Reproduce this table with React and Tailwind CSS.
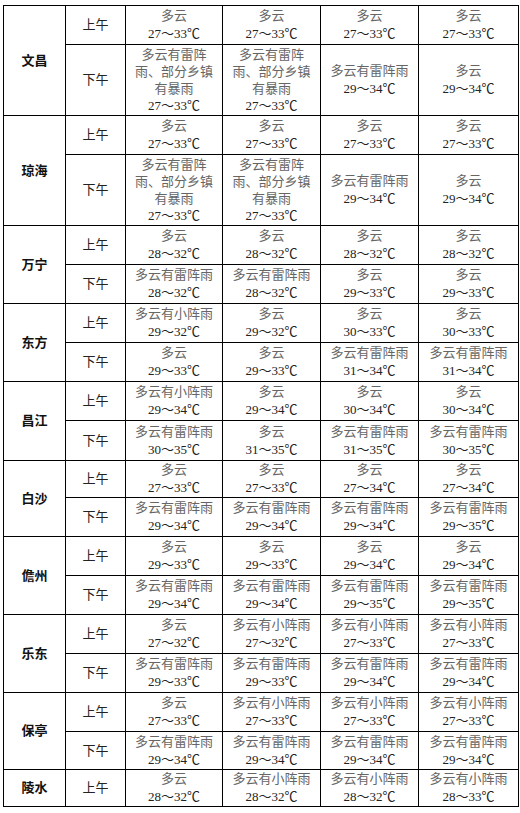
import React from "react";

const L = "多云有雷阵雨、部分乡镇有暴雨";
const a = (w, t) => [w, t];

const data = [
  {
    city: "文昌",
    rows: [
      { h: 39, p: "上午", c: [a("多云", "27～33℃"), a("多云", "27～33℃"), a("多云", "27～33℃"), a("多云", "27～33℃")] },
      { h: 71, p: "下午", c: [a(L, "27～33℃"), a(L, "27～33℃"), a("多云有雷阵雨", "29～34℃"), a("多云", "29～34℃")] },
    ],
  },
  {
    city: "琼海",
    rows: [
      { h: 39, p: "上午", c: [a("多云", "27～33℃"), a("多云", "27～33℃"), a("多云", "27～33℃"), a("多云", "27～33℃")] },
      { h: 71, p: "下午", c: [a(L, "27～33℃"), a(L, "27～33℃"), a("多云有雷阵雨", "29～34℃"), a("多云", "29～34℃")] },
    ],
  },
  {
    city: "万宁",
    rows: [
      { h: 39, p: "上午", c: [a("多云", "28～32℃"), a("多云", "28～32℃"), a("多云", "28～32℃"), a("多云", "28～32℃")] },
      { h: 39, p: "下午", c: [a("多云有雷阵雨", "28～32℃"), a("多云有雷阵雨", "28～32℃"), a("多云", "29～33℃"), a("多云", "29～33℃")] },
    ],
  },
  {
    city: "东方",
    rows: [
      { h: 39, p: "上午", c: [a("多云有小阵雨", "29～32℃"), a("多云", "29～32℃"), a("多云", "30～33℃"), a("多云", "30～33℃")] },
      { h: 39, p: "下午", c: [a("多云", "29～33℃"), a("多云", "29～33℃"), a("多云有雷阵雨", "31～34℃"), a("多云有雷阵雨", "31～34℃")] },
    ],
  },
  {
    city: "昌江",
    rows: [
      { h: 39, p: "上午", c: [a("多云有小阵雨", "29～34℃"), a("多云", "29～34℃"), a("多云", "30～34℃"), a("多云", "30～34℃")] },
      { h: 40, p: "下午", c: [a("多云有雷阵雨", "30～35℃"), a("多云", "31～35℃"), a("多云有雷阵雨", "31～35℃"), a("多云有雷阵雨", "30～35℃")] },
    ],
  },
  {
    city: "白沙",
    rows: [
      { h: 36, p: "上午", c: [a("多云", "27～33℃"), a("多云", "27～33℃"), a("多云", "27～34℃"), a("多云", "27～34℃")] },
      { h: 39, p: "下午", c: [a("多云有雷阵雨", "29～34℃"), a("多云有雷阵雨", "29～34℃"), a("多云有雷阵雨", "29～34℃"), a("多云有雷阵雨", "29～35℃")] },
    ],
  },
  {
    city: "儋州",
    rows: [
      { h: 39, p: "上午", c: [a("多云", "29～33℃"), a("多云", "29～33℃"), a("多云", "29～34℃"), a("多云", "29～34℃")] },
      { h: 39, p: "下午", c: [a("多云有雷阵雨", "29～34℃"), a("多云有雷阵雨", "29～34℃"), a("多云有雷阵雨", "29～35℃"), a("多云有雷阵雨", "29～35℃")] },
    ],
  },
  {
    city: "乐东",
    rows: [
      { h: 39, p: "上午", c: [a("多云", "27～32℃"), a("多云有小阵雨", "27～32℃"), a("多云有小阵雨", "27～33℃"), a("多云有小阵雨", "27～33℃")] },
      { h: 39, p: "下午", c: [a("多云有雷阵雨", "29～33℃"), a("多云有雷阵雨", "29～33℃"), a("多云有雷阵雨", "29～34℃"), a("多云有雷阵雨", "29～34℃")] },
    ],
  },
  {
    city: "保亭",
    rows: [
      { h: 39, p: "上午", c: [a("多云", "27～33℃"), a("多云有小阵雨", "27～33℃"), a("多云有小阵雨", "27～33℃"), a("多云有小阵雨", "27～33℃")] },
      { h: 38, p: "下午", c: [a("多云有雷阵雨", "29～34℃"), a("多云有雷阵雨", "29～34℃"), a("多云有雷阵雨", "29～34℃"), a("多云有雷阵雨", "29～34℃")] },
    ],
  },
  {
    city: "陵水",
    rows: [
      { h: 37, p: "上午", c: [a("多云", "28～32℃"), a("多云有小阵雨", "28～32℃"), a("多云有小阵雨", "28～32℃"), a("多云有小阵雨", "28～33℃")] },
    ],
  },
];

function Cell({ w, t }) {
  if (w === L) {
    return (
      <div className="leading-[17px]">
        <div className="text-[#666]">多云有雷阵</div>
        <div className="text-[#666]">雨、部分乡镇</div>
        <div className="text-[#666]">有暴雨</div>
        <div className="text-[#222]">{t}</div>
      </div>
    );
  }
  return (
    <div className="leading-[18px]">
      <div className="text-[#666]">{w}</div>
      <div className="text-[#222]">{t}</div>
    </div>
  );
}

export default function App() {
  return (
    <div className="bg-white w-[520px] h-[813px] pl-[3px] pt-[5px] font-['Liberation_Serif','Noto_Sans_CJK_SC',serif]">
      <table className="border-collapse table-fixed w-[515px] border border-black">
        <colgroup>
          <col className="w-[62px]" />
          <col className="w-[60px]" />
          <col className="w-[97px]" />
          <col className="w-[98px]" />
          <col className="w-[98px]" />
          <col className="w-[100px]" />
        </colgroup>
        <tbody>
          {data.map((g) =>
            g.rows.map((r, i) => (
              <tr key={g.city + i} style={{ height: r.h }}>
                {i === 0 && (
                  <td
                    rowSpan={g.rows.length}
                    className="border border-black text-center align-middle text-[13px] font-bold text-[#111] p-0"
                  >
                    {g.city}
                  </td>
                )}
                <td className="border border-black text-center align-middle text-[13px] text-[#222] p-0">
                  {r.p}
                </td>
                {r.c.map(([w, t], j) => (
                  <td
                    key={j}
                    className="border border-black text-center align-middle text-[13px] p-0"
                  >
                    <Cell w={w} t={t} />
                  </td>
                ))}
              </tr>
            ))
          )}
        </tbody>
      </table>
    </div>
  );
}
